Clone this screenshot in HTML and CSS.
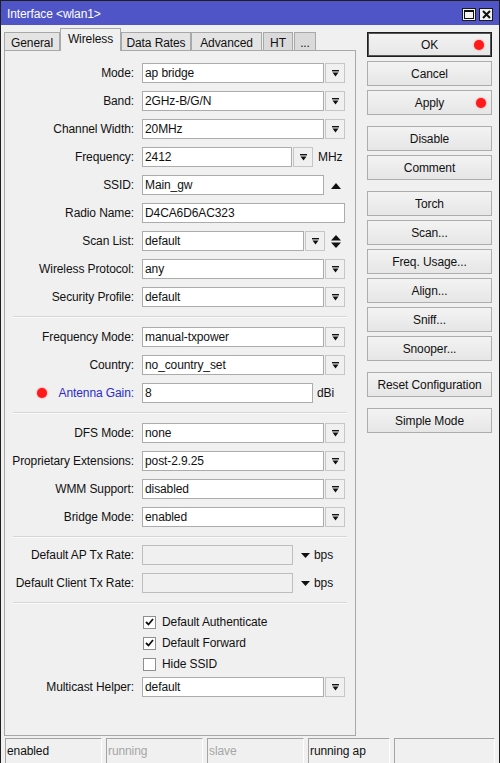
FILE: index.html
```html
<!DOCTYPE html>
<html lang="en">

<head>
    <meta charset="UTF-8">
    <meta name="viewport" content="width=device-width, initial-scale=1.0">
    <title>Interface &lt;wlan1&gt;</title>
    <link rel="stylesheet" href="styles.css">
</head>

<body>
    <div class="window">
        <div class="titlebar">
            <span class="title">Interface &lt;wlan1&gt;</span>
            <div class="tb-btns">
                <span class="tb-btn">
                    <svg width="10" height="9" viewBox="0 0 10 9"><rect x="0.5" y="0.5" width="9" height="8" fill="none" stroke="#111" stroke-width="1"/><rect x="0" y="0" width="10" height="2" fill="#111"/></svg>
                </span>
                <span class="tb-btn">
                    <svg width="9" height="9" viewBox="0 0 9 9"><path d="M1 1L8 8M8 1L1 8" stroke="#111" stroke-width="2"/></svg>
                </span>
            </div>
        </div>

        <div class="main">
            <div class="left">
                <div class="tabs">
                    <span class="tab t-general">General</span>
                    <span class="tab active t-wireless">Wireless</span>
                    <span class="tab t-rates">Data Rates</span>
                    <span class="tab t-adv">Advanced</span>
                    <span class="tab t-ht">HT</span>
                    <span class="tab t-more">...</span>
                </div>
                <div class="panel">
                    <div class="group">
                        <div class="row"><label>Mode:</label><span class="inp w-sel">ap bridge</span><span class="dd"><svg width="7" height="7" viewBox="0 0 7 7"><rect x="0" y="0" width="7" height="1.4"/><path d="M0.5 2.6H6.5L3.5 6.6z"/></svg></span></div>
                        <div class="row"><label>Band:</label><span class="inp w-sel">2GHz-B/G/N</span><span class="dd"><svg width="7" height="7" viewBox="0 0 7 7"><rect x="0" y="0" width="7" height="1.4"/><path d="M0.5 2.6H6.5L3.5 6.6z"/></svg></span></div>
                        <div class="row"><label>Channel Width:</label><span class="inp w-sel">20MHz</span><span class="dd"><svg width="7" height="7" viewBox="0 0 7 7"><rect x="0" y="0" width="7" height="1.4"/><path d="M0.5 2.6H6.5L3.5 6.6z"/></svg></span></div>
                        <div class="row"><label>Frequency:</label><span class="inp w-freq">2412</span><span class="dd"><svg width="7" height="7" viewBox="0 0 7 7"><rect x="0" y="0" width="7" height="1.4"/><path d="M0.5 2.6H6.5L3.5 6.6z"/></svg></span><span class="unit">MHz</span></div>
                        <div class="row"><label>SSID:</label><span class="inp w-sel">Main_gw</span><svg class="updown up-only" width="10" height="6" viewBox="0 0 10 6"><path d="M0 6H10L5 0z"/></svg></div>
                        <div class="row"><label>Radio Name:</label><span class="inp w-full">D4CA6D6AC323</span></div>
                        <div class="row"><label>Scan List:</label><span class="inp w-scan">default</span><span class="dd"><svg width="7" height="7" viewBox="0 0 7 7"><rect x="0" y="0" width="7" height="1.4"/><path d="M0.5 2.6H6.5L3.5 6.6z"/></svg></span><svg class="updown" width="10" height="13" viewBox="0 0 10 13"><path d="M0 5.5H10L5 0z M0 7.5H10L5 13z"/></svg></div>
                        <div class="row"><label>Wireless Protocol:</label><span class="inp w-sel">any</span><span class="dd"><svg width="7" height="7" viewBox="0 0 7 7"><rect x="0" y="0" width="7" height="1.4"/><path d="M0.5 2.6H6.5L3.5 6.6z"/></svg></span></div>
                        <div class="row"><label>Security Profile:</label><span class="inp w-sel">default</span><span class="dd"><svg width="7" height="7" viewBox="0 0 7 7"><rect x="0" y="0" width="7" height="1.4"/><path d="M0.5 2.6H6.5L3.5 6.6z"/></svg></span></div>
                    </div>
                    <div class="sep"></div>
                    <div class="group">
                        <div class="row"><label>Frequency Mode:</label><span class="inp w-sel">manual-txpower</span><span class="dd"><svg width="7" height="7" viewBox="0 0 7 7"><rect x="0" y="0" width="7" height="1.4"/><path d="M0.5 2.6H6.5L3.5 6.6z"/></svg></span></div>
                        <div class="row"><label>Country:</label><span class="inp w-sel">no_country_set</span><span class="dd"><svg width="7" height="7" viewBox="0 0 7 7"><rect x="0" y="0" width="7" height="1.4"/><path d="M0.5 2.6H6.5L3.5 6.6z"/></svg></span></div>
                        <div class="row"><span class="dot row-dot"></span><label class="changed">Antenna Gain:</label><span class="inp w-gain">8</span><span class="unit u-dbi">dBi</span></div>
                    </div>
                    <div class="sep"></div>
                    <div class="group">
                        <div class="row"><label>DFS Mode:</label><span class="inp w-sel">none</span><span class="dd"><svg width="7" height="7" viewBox="0 0 7 7"><rect x="0" y="0" width="7" height="1.4"/><path d="M0.5 2.6H6.5L3.5 6.6z"/></svg></span></div>
                        <div class="row"><label>Proprietary Extensions:</label><span class="inp w-sel">post-2.9.25</span><span class="dd"><svg width="7" height="7" viewBox="0 0 7 7"><rect x="0" y="0" width="7" height="1.4"/><path d="M0.5 2.6H6.5L3.5 6.6z"/></svg></span></div>
                        <div class="row"><label>WMM Support:</label><span class="inp w-sel">disabled</span><span class="dd"><svg width="7" height="7" viewBox="0 0 7 7"><rect x="0" y="0" width="7" height="1.4"/><path d="M0.5 2.6H6.5L3.5 6.6z"/></svg></span></div>
                        <div class="row"><label>Bridge Mode:</label><span class="inp w-sel">enabled</span><span class="dd"><svg width="7" height="7" viewBox="0 0 7 7"><rect x="0" y="0" width="7" height="1.4"/><path d="M0.5 2.6H6.5L3.5 6.6z"/></svg></span></div>
                    </div>
                    <div class="sep"></div>
                    <div class="group g-rates">
                        <div class="row"><label>Default AP Tx Rate:</label><span class="inp w-rate off"></span><svg class="down" width="9" height="5" viewBox="0 0 9 5"><path d="M0 0H9L4.5 5z"/></svg><span class="unit u-bps">bps</span></div>
                        <div class="row"><label>Default Client Tx Rate:</label><span class="inp w-rate off"></span><svg class="down" width="9" height="5" viewBox="0 0 9 5"><path d="M0 0H9L4.5 5z"/></svg><span class="unit u-bps">bps</span></div>
                    </div>
                    <div class="sep"></div>
                    <div class="checks">
                        <div class="check"><span class="cb"><svg width="9" height="8" viewBox="0 0 9 8"><path d="M1 4L3.5 6.5L8 1" fill="none" stroke="#111" stroke-width="1.8"/></svg></span>Default Authenticate</div>
                        <div class="check"><span class="cb"><svg width="9" height="8" viewBox="0 0 9 8"><path d="M1 4L3.5 6.5L8 1" fill="none" stroke="#111" stroke-width="1.8"/></svg></span>Default Forward</div>
                        <div class="check"><span class="cb"></span>Hide SSID</div>
                    </div>
                    <div class="group g-last">
                        <div class="row"><label>Multicast Helper:</label><span class="inp w-sel">default</span><span class="dd"><svg width="7" height="7" viewBox="0 0 7 7"><rect x="0" y="0" width="7" height="1.4"/><path d="M0.5 2.6H6.5L3.5 6.6z"/></svg></span></div>
                    </div>
                </div>
            </div>

            <div class="buttons">
                <div class="bgroup">
                    <button class="btn ok">OK<span class="dot btn-dot d-ok"></span></button>
                    <button class="btn">Cancel</button>
                    <button class="btn">Apply<span class="dot btn-dot d-apply"></span></button>
                </div>
                <div class="bgroup">
                    <button class="btn">Disable</button>
                    <button class="btn">Comment</button>
                </div>
                <div class="bgroup">
                    <button class="btn">Torch</button>
                    <button class="btn">Scan...</button>
                    <button class="btn">Freq. Usage...</button>
                    <button class="btn">Align...</button>
                    <button class="btn">Sniff...</button>
                    <button class="btn">Snooper...</button>
                </div>
                <div class="bgroup">
                    <button class="btn">Reset Configuration</button>
                </div>
                <div class="bgroup">
                    <button class="btn">Simple Mode</button>
                </div>
            </div>
        </div>

        <div class="status">
            <span class="cell c1">enabled</span>
            <span class="cell c2 dim">running</span>
            <span class="cell c3 dim">slave</span>
            <span class="cell c4">running ap</span>
            <span class="cell c5"></span>
        </div>
    </div>
</body>

</html>
```

FILE: styles.css
```css
* {
    padding: 0;
    margin: 0;
    box-sizing: border-box;
}

body {
    font-family: "Liberation Sans", Arial, sans-serif;
    font-size: 12px;
    letter-spacing: -0.1px;
    color: #111;
    background-color: #f0f0f0;
}

.window {
    width: 500px;
    height: 763px;
    border: 1px solid #1e1e1e;
    border-bottom: none;
    background-color: #f0f0f0;
    display: flex;
    flex-direction: column;
}

/* title bar */
.titlebar {
    height: 24px;
    background-color: #4f55c6;
    display: flex;
    align-items: center;
    justify-content: space-between;
    padding: 2px 6px 0 6px;
}

.title {
    color: #fff;
    font-size: 12px;
}

.tb-btns {
    display: flex;
    gap: 3px;
}

.tb-btn {
    width: 14px;
    height: 13px;
    border: 1px solid #1a1a1a;
    background-color: #f2f2f2;
    display: flex;
    align-items: center;
    justify-content: center;
}

/* main area */
.main {
    height: 713px;
    display: flex;
}

.left {
    padding: 3px 0 0 3px;
    width: 355px;
}

.tabs {
    height: 22px;
    display: flex;
    align-items: flex-end;
    position: relative;
    z-index: 1;
}

.tab {
    height: 18px;
    border: 1px solid #a8a8a8;
    border-bottom: none;
    background-color: #e4e4e4;
    display: flex;
    align-items: center;
    justify-content: center;
    padding-top: 2px;
}

.tab.active {
    height: 23px;
    margin-bottom: -1px;
    background-color: #f0f0f0;
    padding-top: 0;
    padding-bottom: 3px;
}

.t-general { width: 56px; }
.t-wireless { width: 61px; }
.t-rates { width: 70px; }
.t-adv { width: 71px; }
.t-ht { width: 30px; margin-left: 1px; background-color: #dadada; }
.t-more { width: 22px; margin-left: 1px; background-color: #dadada; }

.panel {
    height: 686px;
    width: 352px;
    border: 1px solid #a8a8a8;
    padding-top: 12px;
}

.group {
    display: flex;
    flex-direction: column;
    gap: 8px;
}

.row {
    height: 20px;
    display: flex;
    align-items: center;
    position: relative;
}

.row label {
    width: 129px;
    margin-right: 8px;
    text-align: right;
    white-space: nowrap;
}

.row label.changed {
    color: #2b2bcf;
}

.inp {
    height: 20px;
    border: 1px solid #acacac;
    background-color: #fff;
    padding-left: 2px;
    display: flex;
    align-items: center;
    white-space: nowrap;
}

.inp.off {
    background-color: #f0f0f0;
    border-color: #bdbdbd;
}

.w-sel { width: 182px; }
.w-full { width: 203px; }
.w-freq { width: 150px; }
.w-scan { width: 162px; }
.w-gain { width: 171px; }
.w-rate { width: 151px; }

.dd {
    width: 20px;
    height: 20px;
    margin-left: 1px;
    border: 1px solid #c6c6c6;
    background-color: #f0f0f0;
    display: flex;
    align-items: center;
    justify-content: center;
}

.dd svg {
    fill: #111;
}

.unit {
    margin-left: 5px;
}

.u-dbi {
    margin-left: 4px;
}

.u-bps {
    margin-left: 4px;
}

.updown {
    margin-left: 6px;
    fill: #111;
}

.up-only {
    margin-left: 7px;
    margin-top: 2px;
}

.down {
    margin-left: 8px;
    fill: #111;
}

.sep {
    margin: 9px 8px 9px 8px;
    border-top: 1px solid #d6d6d6;
    border-bottom: 1px solid #fbfbfb;
}

.g-rates {
    margin-top: -2px;
}

.checks {
    display: flex;
    flex-direction: column;
    gap: 3px;
    padding-left: 138px;
}

.check {
    height: 18px;
    display: flex;
    align-items: center;
}

.cb {
    width: 13px;
    height: 13px;
    border: 1px solid #8e8f8f;
    background-color: #fff;
    margin-right: 6px;
    display: flex;
    align-items: center;
    justify-content: center;
}

.g-last {
    margin-top: 4px;
}

/* red markers */
.dot {
    width: 10px;
    height: 10px;
    border-radius: 50%;
    background-color: #ff1a1a;
    box-shadow: 0 0 2px #ff6060;
    position: absolute;
}

.row-dot {
    left: 32px;
    top: 5px;
}

/* right buttons */
.buttons {
    margin-left: 11px;
    padding-top: 7px;
    width: 125px;
    display: flex;
    flex-direction: column;
    gap: 11px;
}

.bgroup {
    display: flex;
    flex-direction: column;
    gap: 4px;
}

.btn {
    height: 25px;
    width: 125px;
    border: 1px solid #adadad;
    background: linear-gradient(#f3f3f3, #e6e6e6);
    font-family: "Liberation Sans", Arial, sans-serif;
    font-size: 12px;
    letter-spacing: -0.1px;
    color: #111;
    position: relative;
}

.btn.ok {
    border: 1px solid #1e1e1e;
    box-shadow: inset 0 0 0 1px #555;
}

.btn-dot {
    top: 7px;
}

.d-ok { right: 7px; }
.d-apply { right: 5px; }

/* status bar */
.status {
    height: 25px;
    display: flex;
    gap: 4px;
    padding-left: 4px;
}

.cell {
    height: 25px;
    border-top: 1px solid #a4a4a4;
    border-left: 1px solid #a4a4a4;
    border-right: 1px solid #fdfdfd;
    padding-left: 1px;
    display: flex;
    align-items: center;
    white-space: nowrap;
}

.cell.dim {
    color: #a6a6a6;
}

.c1 { width: 97px; }
.c2 { width: 97px; }
.c3 { width: 97px; }
.c4 { width: 82px; }
.c5 { width: 101px; }
```
